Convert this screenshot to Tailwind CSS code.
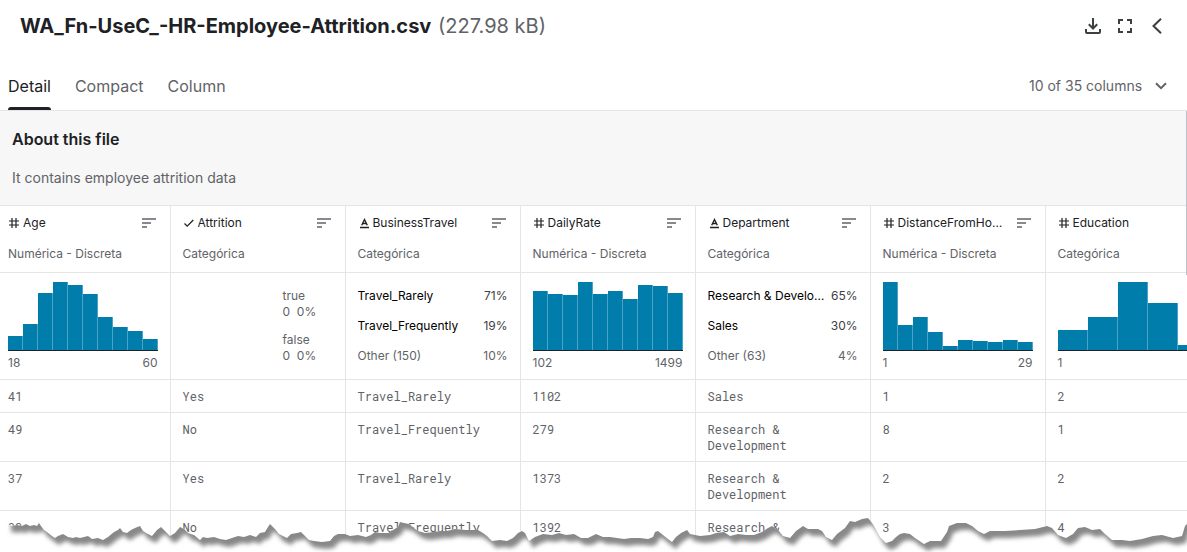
<!DOCTYPE html>
<html lang="en">
<head>
<meta charset="utf-8">
<meta name="viewport" content="width=device-width, initial-scale=1">
<title>WA_Fn-UseC_-HR-Employee-Attrition.csv</title>
<script src="https://cdn.jsdelivr.net/npm/@tailwindcss/browser@4"></script>
</head>
<body class="bg-white font-['Inter',sans-serif] text-[#5f6368]">
<svg class="hidden" aria-hidden="true">
  <symbol id="hash" viewBox="0 0 12 12"><path d="M4 1v10M8 1v10M1 4h10M1 8h10" fill="none" stroke="#202124" stroke-width="1.2"/></symbol>
  <symbol id="letter" viewBox="0 0 12 12"><path d="M2 10.500h9M3.700 8.200 6.500 2.500l2.800 5.700M4.700 6.500h3.600" fill="none" stroke="#202124" stroke-width="1.400"/></symbol>
  <symbol id="check" viewBox="0 0 12 12"><path d="M1.500 6.500 4.200 9.200 10.300 3" fill="none" stroke="#202124" stroke-width="1.300"/></symbol>
  <symbol id="sort" viewBox="0 0 14 10"><path d="M0 1h14M0 5h9M0 9h5" fill="none" stroke="#5f6368" stroke-width="1.500"/></symbol>
</svg>
<div class="relative h-screen overflow-hidden">
  <header class="flex h-[52px] items-center justify-between pl-5 pr-[22px]">
    <h1 class="text-xl font-bold text-[#202124]">WA_Fn-UseC_-HR-Employee-Attrition.csv <span class="ml-0.5 font-normal text-[#5f6368]">(227.98 kB)</span></h1>
    <div class="flex items-center gap-4">
      <button type="button" aria-label="Download"><svg class="size-4" viewBox="0 0 16 16" fill="none" stroke="#3c4043" stroke-width="2"><path d="M8 0v10M3.800 6.300 8 10.500l4.200-4.200M1 11v3.100q0 .9.900.9h12.200q.9 0 .9-.9V11"/></svg></button>
      <button type="button" aria-label="Fullscreen"><svg class="size-4" viewBox="0 0 16 16" fill="none" stroke="#3c4043" stroke-width="2"><path d="M2 6V2h4M10 2h4v4M14 10v4h-4M6 14H2v-4"/></svg></button>
      <button type="button" aria-label="Collapse"><svg class="size-4" viewBox="0 0 16 16" fill="none" stroke="#3c4043" stroke-width="2"><path d="M12 .8 4.500 8l7.500 7.200"/></svg></button>
    </div>
  </header>
  <div class="flex h-[59px] items-end justify-between border-b border-[#e4e5e7] pl-2 pr-5">
    <nav class="flex gap-6 text-base">
      <button type="button" class="relative pb-3 text-[#202124]">Detail<span class="absolute inset-x-0 bottom-0 h-[3px] rounded-t bg-[#202124]"></span></button>
      <button type="button" class="pb-3">Compact</button>
      <button type="button" class="pb-3">Column</button>
    </nav>
    <label class="flex items-center gap-3 pb-3.5 text-sm">
      <select aria-label="Columns" class="appearance-none bg-transparent"><option>10 of 35 columns</option></select>
      <svg class="h-2 w-3" viewBox="0 0 12 8" fill="none" stroke="#5f6368" stroke-width="2"><path d="m1 1.200 5 5 5-5"/></svg>
    </label>
  </div>
  <section class="h-[94px] bg-[#f7f7f7] px-3 pt-4">
    <h2 class="text-base font-semibold text-[#202124]">About this file</h2>
    <p class="mt-[17px] text-sm">It contains employee attrition data</p>
  </section>
  <table class="w-[1220px] table-fixed border-collapse text-left text-xs [&_td]:border-r [&_td]:border-b [&_td]:border-[#e4e5e7] [&_td]:px-3 [&_td:first-child]:pl-2 [&_th]:border [&_th]:border-[#e4e5e7] [&_th]:px-3 [&_th:first-child]:border-l-0 [&_th:first-child]:pl-2">
    <colgroup><col class="w-[170px]"><col class="w-[175px]"><col class="w-[175px]"><col class="w-[175px]"><col class="w-[175px]"><col class="w-[175px]"><col class="w-[175px]"></colgroup>
    <thead><tr id="heads" class="h-[67px]"></tr></thead>
    <tbody id="rows" class="align-top">
      <tr id="stats" class="h-[107px]"></tr>
    </tbody>
  </table>
  <div class="absolute right-0 top-[111px] h-[164px] w-px bg-[#bdc1c6]"></div>
  <svg class="absolute left-0 top-[510px] h-[42px] w-[1187px]" viewBox="0 510 1187 42" aria-hidden="true">
    <defs>
      <clipPath id="below"><path id="edge-clip"/></clipPath>
      <filter id="soft" x="-2%" y="-50%" width="104%" height="200%"><feGaussianBlur stdDeviation="2"/></filter>
    </defs>
    <path id="edge-white" fill="#fff"/>
    <g clip-path="url(#below)"><path id="edge-shadow" fill="#888" filter="url(#soft)"/></g>
  </svg>
</div>
<script>
const columns = [
  ['hash', 'Age', 'Numérica - Discreta', {bars: [14,26,57,68,65,56,33,23,19,11], ends: ['18', '60']}],
  ['check', 'Attrition', 'Categórica', {bool: true}],
  ['letter', 'BusinessTravel', 'Categórica', {top: [['Travel_Rarely','71%'],['Travel_Frequently','19%'],['Other (150)','10%']]}],
  ['hash', 'DailyRate', 'Numérica - Discreta', {bars: [59,56,55,68,56,59,51,65,64,57], ends: ['102', '1499']}],
  ['letter', 'Department', 'Categórica', {top: [['Research &amp; Development','65%'],['Sales','30%'],['Other (63)','4%']]}],
  ['hash', 'DistanceFromHome', 'Numérica - Discreta', {bars: [68,25,33,18,4,10,9,8,10,8], ends: ['1', '29']}],
  ['hash', 'Education', 'Categórica', {bars: [20,33,68,47,5], ends: ['1', '5']}],
];
const records = [
  ['41','Yes','Travel_Rarely','1102','Sales','1','2'],
  ['49','No','Travel_Frequently','279','Research &amp; Development','8','1'],
  ['37','Yes','Travel_Rarely','1373','Research &amp; Development','2','2'],
  ['33','No','Travel_Frequently','1392','Research &amp; Development','3','4'],
];
document.getElementById('heads').innerHTML = columns.map(([icon, name, kind]) => `
  <th scope="col" class="align-top font-normal">
    <div class="mt-[9px] flex h-4 items-center pr-0.5 text-[#202124]">
      <svg class="mr-[3px] size-3 shrink-0"><use href="#${icon}"/></svg>
      <span class="w-[108px] truncate">${name}</span>
      <button type="button" aria-label="Sort ${name}" class="ml-auto"><svg class="h-2.5 w-3.5"><use href="#sort"/></svg></button>
    </div>
    <div class="mt-[15px]">${kind}</div>
  </th>`).join('');
document.getElementById('stats').innerHTML = columns.map(([, , , s]) => {
  if (s.bars) return `<td><div class="mt-2 flex h-[70px] items-end border-b border-[#202124]">${s.bars.map(h =>
    `<div class="flex-1 border-r border-[#4da3c7] bg-[#007dab]" style="height:${h}px"></div>`).join('')}</div>
    <div class="mt-1 flex justify-between"><span>${s.ends[0]}</span><span>${s.ends[1]}</span></div></td>`;
  if (s.bool) return `<td><div class="mt-[15px] pl-[100px]"><p>true</p><p>0 &nbsp;0%</p><p class="mt-3">false</p><p>0 &nbsp;0%</p></div></td>`;
  return `<td><div class="mt-[15px] flex flex-col gap-3.5">${s.top.map(([label, pct], i) =>
    `<div class="flex justify-between ${i < 2 ? 'text-black' : ''}"><span class="w-[118px] truncate">${label}</span><span class="${i < 2 ? 'text-[#3c4043]' : ''}">${pct}</span></div>`).join('')}</div></td>`;
}).join('');
document.getElementById('rows').insertAdjacentHTML('beforeend', records.map(r =>
  `<tr class="font-['Roboto_Mono','DejaVu_Sans_Mono',monospace]">${r.map(v => `<td class="py-2">${v}</td>`).join('')}</tr>`).join(''));

// Torn paper edge: the page shape, and the same shape shifted as its shadow.
const edge = [[-10,530],[0,530],[7,528],[8,524],[12,526],[17,525],[22,526],[26,524],[30,526],[34,525],[37,526],[39,523],[41,526],[44,530],[47,532],[52,536],[55,538],[58,536],[63,534],[68,537],[73,538],[76,537],[80,538],[84,537],[88,536],[92,539],[98,538],[103,540],[108,537],[114,532],[118,530],[120,528],[123,532],[127,533],[131,530],[135,528],[140,526],[143,531],[148,534],[152,536],[157,530],[161,527],[165,531],[170,536],[175,533],[180,527],[184,529],[188,533],[194,535],[200,540],[203,537],[207,538],[214,537],[220,539],[226,540],[232,538],[238,536],[244,537],[250,535],[256,537],[260,533],[265,532],[268,527],[270,524],[275,529],[279,534],[287,538],[291,534],[297,533],[301,532],[304,535],[309,540],[314,541],[322,542],[330,541],[334,536],[338,534],[345,534],[350,536],[358,535],[366,537],[371,535],[375,532],[380,533],[388,533],[393,530],[398,527],[400,522],[404,523],[409,524],[414,528],[418,531],[425,533],[434,532],[440,531],[447,531],[455,529],[466,530],[478,530],[483,533],[487,536],[492,541],[500,540],[507,541],[513,538],[518,533],[522,531],[525,533],[529,541],[535,537],[543,534],[552,535],[559,533],[566,535],[574,534],[581,538],[588,538],[596,534],[603,537],[610,537],[617,538],[624,539],[631,538],[640,538],[648,539],[653,537],[655,532],[658,531],[663,535],[668,539],[672,542],[676,537],[681,533],[687,530],[690,534],[700,536],[710,535],[716,533],[724,532],[730,536],[738,534],[746,535],[754,535],[762,532],[768,528],[772,526],[778,530],[783,536],[790,538],[796,531],[803,526],[808,529],[818,529],[822,531],[826,537],[832,540],[837,534],[845,528],[850,521],[855,522],[862,519],[868,518],[872,523],[874,526],[880,537],[886,543],[892,541],[896,537],[900,534],[904,533],[910,534],[915,538],[924,544],[930,541],[941,541],[947,532],[949,526],[957,523],[966,523],[972,526],[978,531],[984,534],[990,531],[1005,531],[1020,530],[1035,529],[1047,526],[1052,528],[1058,535],[1066,538],[1073,534],[1078,528],[1085,527],[1092,530],[1100,529],[1105,534],[1112,540],[1122,540],[1130,541],[1142,539],[1153,536],[1162,535],[1173,538],[1182,536],[1185,526],[1187,524],[1200,524]];
const line = (dx, dy) => edge.filter(([x]) => dx === 0 || x > 3).map(([x, y]) => `${x + dx} ${y + dy}`).join('L');
document.getElementById('edge-clip').setAttribute('d', `M${line(0, 0)}V570H-10Z`);
document.getElementById('edge-white').setAttribute('d', `M${line(0, 0)}V570H-10Z`);
document.getElementById('edge-shadow').setAttribute('d', `M${line(4, 7)}V490H11Z`);
</script>
</body>
</html>
